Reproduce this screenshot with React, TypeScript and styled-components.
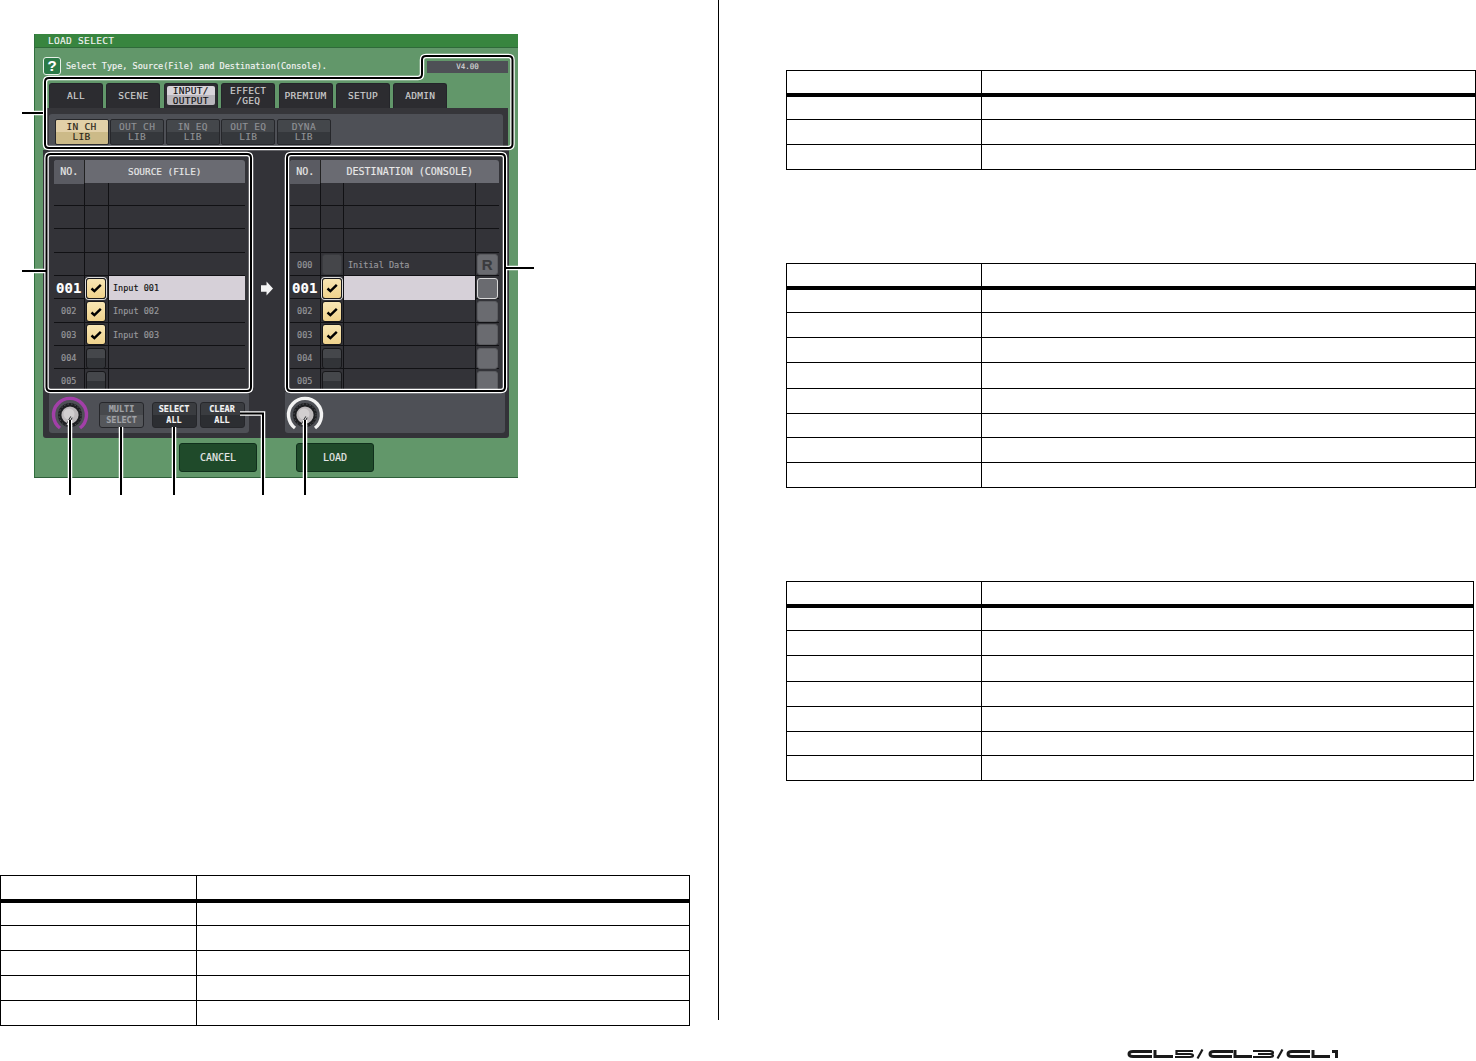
import React from "react";
import styled, { createGlobalStyle } from "styled-components";

const mono = `"DejaVu Sans Mono", "Liberation Mono", monospace`;

const GlobalStyle = createGlobalStyle`
  html, body {
    margin: 0;
    padding: 0;
    background: #fff;
  }
  * {
    box-sizing: border-box;
  }
`;

const Page = styled.div`
  display: flex;
  width: 1476px;
  height: 1061px;
  overflow: hidden;
  background: #fff;
`;

const LeftColumn = styled.div`
  position: relative;
  width: 718px;
  flex: none;
  padding-top: 34px;
`;

const Divider = styled.div`
  width: 1px;
  height: 1020px;
  flex: none;
  background: #000;
`;

const RightColumn = styled.div`
  margin-left: 67px;
  padding-top: 70px;
  flex: none;
  width: 690px;
`;

/* document tables */
const DocTableBox = styled.div<{ $width: number; $top: number }>`
  width: ${(p) => p.$width}px;
  margin-top: ${(p) => p.$top}px;
  border: 1px solid #000;
  border-bottom: 0;
`;

const DocRow = styled.div<{ $col: number; $height: number; $head?: boolean }>`
  display: grid;
  grid-template-columns: ${(p) => p.$col}px 1fr;
  height: ${(p) => p.$height}px;
  border-bottom: ${(p) => (p.$head ? 4 : 1)}px solid #000;
`;

const DocCell = styled.div`
  border-right: 1px solid #000;
`;

type DocTableProps = {
  width: number;
  col: number;
  rows: number[];
  top?: number;
  head?: number;
};

const DocTable: React.FC<DocTableProps> = ({ width, col, rows, top = 0, head = 26 }) => (
  <DocTableBox $width={width} $top={top}>
    <DocRow $col={col} $height={head} $head>
      <DocCell />
      <div />
    </DocRow>
    {rows.map((height, i) => (
      <DocRow key={i} $col={col} $height={height}>
        <DocCell />
        <div />
      </DocRow>
    ))}
  </DocTableBox>
);

/* console window */
const Window = styled.div`
  width: 484px;
  height: 444px;
  margin-left: 34px;
  background: #62976a;
  border-left: 1px solid #2f6f3d;
  border-bottom: 1px solid #2f5f3a;
  font-family: ${mono};
  -webkit-text-stroke: 0.15px currentColor;
`;

const TitleBar = styled.div`
  height: 14px;
  background: #38853f;
  border-bottom: 1px solid #2f6a3a;
  padding-left: 13px;
  color: #f2f2f2;
  font-size: 9.5px;
  letter-spacing: 0.3px;
  line-height: 14px;
`;

const PromptRow = styled.div`
  height: 35px;
  display: flex;
  align-items: flex-start;
  padding: 9px 10px 0 8px;
`;

const HelpIcon = styled.div`
  width: 18px;
  height: 18px;
  background: #2b7a47;
  border: 1px solid #e8f0e8;
  border-radius: 3px;
  color: #fff;
  font-family: "Liberation Sans", sans-serif;
  font-weight: 700;
  font-size: 15px;
  line-height: 16px;
  text-align: center;
`;

const PromptText = styled.div`
  margin-left: 5px;
  flex: 1;
  color: #f4f4f4;
  font-size: 8.5px;
  line-height: 18px;
  white-space: nowrap;
`;

const VersionBox = styled.div`
  width: 81px;
  height: 12px;
  margin-top: 4px;
  background: #4e5056;
  color: #d8d8d8;
  font-size: 7.5px;
  line-height: 12px;
  text-align: center;
`;

const TabRow = styled.div`
  display: flex;
  gap: 3.4px;
  height: 25px;
  padding-left: 14px;
`;

const Tab = styled.div`
  width: 54px;
  flex: none;
  display: flex;
  align-items: center;
  justify-content: center;
  text-align: center;
  border: 1px solid #24252a;
  border-bottom: 0;
  border-radius: 3px 3px 0 0;
  background: #2c2c30;
  color: #d0d0d0;
  font-size: 9.5px;
  letter-spacing: 0.3px;
  line-height: 10px;
  white-space: pre-line;
`;

const ActiveTabFace = styled.div`
  flex: 1;
  align-self: stretch;
  margin: 2px 2px 3px;
  display: flex;
  align-items: center;
  justify-content: center;
  border-radius: 2px;
  background: linear-gradient(#d8d4da 50%, #b9b6bc 50%);
  color: #111;
`;

const TabPanel = styled.div`
  height: 42px;
  margin: 0 10px 0 12px;
  padding-top: 6px;
  background: #36363a;
`;

const SubPanel = styled.div`
  height: 36px;
  margin: 0 5px 0 2px;
  display: flex;
  gap: 1.6px;
  padding: 5px 0 0 5.5px;
  border-radius: 3px 3px 0 0;
  background: #4e5056;
`;

const SubButton = styled.div<{ $on?: boolean }>`
  width: 54px;
  height: 26px;
  flex: none;
  display: flex;
  align-items: center;
  justify-content: center;
  border: 1px solid #26272b;
  border-radius: 2px;
  text-align: center;
  font-size: 9.5px;
  letter-spacing: 0.3px;
  line-height: 10.5px;
  white-space: pre-line;
  background: ${(p) =>
    p.$on
      ? "linear-gradient(#e2d0a8 50%, #ccba88 50%)"
      : "linear-gradient(#44474b 50%, #35383c 50%)"};
  color: ${(p) => (p.$on ? "#2a2418" : "#8f9195")};
`;

const MainPanel = styled.div`
  width: 466px;
  height: 288px;
  margin-left: 8px;
  display: grid;
  grid-template-columns: 206px 36px 224px;
  background: #333338;
  border-radius: 0 0 3px 3px;
`;

const Side = styled.div`
  display: flex;
  flex-direction: column;
`;

const ListBox = styled.div<{ $left: number; $width: number }>`
  height: 242px;
  padding: 9.5px 0 0 ${(p) => p.$left}px;
  width: ${(p) => p.$left + p.$width}px;
`;

const ListHeader = styled.div<{ $cols: string; $size: number }>`
  display: grid;
  grid-template-columns: ${(p) => p.$cols};
  height: 23.3px;
  background: #6a6b72;
  border-radius: 3px 3px 0 0;
  color: #e8e8e8;
  font-size: ${(p) => p.$size}px;
  line-height: 24px;
  text-align: center;
`;

const HeaderNo = styled.div`
  background: #5a5b62;
  border-right: 1px solid #222;
  border-radius: 3px 0 0 0;
  font-size: 10px;
  padding-left: 1px;
`;

const HeaderTitle = styled.div`
  grid-column: 2 / -1;
`;

const ListBody = styled.div`
  height: 207.2px;
  overflow: hidden;
`;

const ListRow = styled.div<{ $cols: string }>`
  display: grid;
  grid-template-columns: ${(p) => p.$cols};
  height: 23.3px;
  border-bottom: 1px solid #111114;
`;

const NoCell = styled.div<{ $selected?: boolean }>`
  border-right: 1px solid #111114;
  text-align: center;
  color: ${(p) => (p.$selected ? "#fff" : "#98989c")};
  font-size: ${(p) => (p.$selected ? 14 : 8.5)}px;
  font-weight: ${(p) => (p.$selected ? 700 : 400)};
  line-height: 24.5px;
`;

const CheckCell = styled.div`
  border-right: 1px solid #111114;
  display: flex;
  align-items: center;
  justify-content: center;
`;

const CheckBox = styled.div<{ $state: "on" | "off" | "dim"; $selected?: boolean }>`
  width: 20px;
  height: 21px;
  display: flex;
  align-items: center;
  justify-content: center;
  border-radius: 3px;
  border: 1px solid ${(p) => (p.$state === "dim" ? "#3a3b3f" : "#17171a")};
  box-shadow: ${(p) => (p.$selected ? "0 0 0 1px #d8d8d8" : "none")};
  background: ${(p) =>
    p.$state === "on"
      ? "linear-gradient(#f8e6b4, #efd28c)"
      : p.$state === "dim"
        ? "#45464a"
        : "linear-gradient(#45474b 45%, #323438 45%)"};
`;

const NameCell = styled.div<{ $selected?: boolean; $divided?: boolean }>`
  padding-left: 4.5px;
  background: ${(p) => (p.$selected ? "#d6d0d8" : "transparent")};
  border-right: ${(p) => (p.$divided ? "1px solid #111114" : "0")};
  color: ${(p) => (p.$selected ? "#111" : "#98989c")};
  font-size: 8.5px;
  line-height: 24.5px;
  white-space: pre;
`;

const RecallCell = styled.div`
  display: flex;
  align-items: center;
  justify-content: center;
`;

const RecallButton = styled.div<{ $selected?: boolean }>`
  width: 21px;
  height: 21px;
  border-radius: 3px;
  background: #6a6b70;
  border: 1px solid ${(p) => (p.$selected ? "#d8d8d8" : "#5b5c60")};
  color: #3a3b3e;
  font-family: "Liberation Sans", sans-serif;
  font-weight: 700;
  font-size: 15px;
  line-height: 19px;
  text-align: center;
`;

const ArrowColumn = styled.div`
  padding: 131px 0 0 12px;
`;

const ControlPanel = styled.div<{ $left: number; $width: number; $inset: number }>`
  height: 41px;
  width: ${(p) => p.$width}px;
  margin-left: ${(p) => p.$left}px;
  display: flex;
  padding: 4px 0 0 ${(p) => p.$inset}px;
  background: #4e5056;
  border-radius: 0 0 3px 3px;
`;

const KnobSvg = styled.svg`
  flex: none;
  display: block;
`;

const ControlButton = styled.div<{ $dim?: boolean; $gap: number }>`
  width: 45px;
  height: 26px;
  margin-top: 6px;
  margin-left: ${(p) => p.$gap}px;
  flex: none;
  display: flex;
  align-items: center;
  justify-content: center;
  border: 1px solid #26272b;
  border-radius: 3px;
  text-align: center;
  font-size: 8.5px;
  font-weight: 700;
  line-height: 11px;
  white-space: pre-line;
  background: ${(p) =>
    p.$dim ? "linear-gradient(#47494d 50%, #55575b 50%)" : "linear-gradient(#3a3c40 50%, #2c2e32 50%)"};
  color: ${(p) => (p.$dim ? "#a0a2a6" : "#f4f4f4")};
`;

const Footer = styled.div`
  display: flex;
  justify-content: center;
  gap: 39px;
  padding-top: 5px;
`;

const FooterButton = styled.div`
  width: 78px;
  height: 29px;
  border: 1px solid #10301c;
  border-radius: 3px;
  background: #1f4a2a;
  color: #e8e8e8;
  font-size: 10px;
  line-height: 27px;
  text-align: center;
`;

const CalloutLayer = styled.svg`
  position: absolute;
  left: 0;
  top: 0;
  pointer-events: none;
`;

const LogoSvg = styled.svg`
  display: block;
  margin: 268px 0 0 341px;
`;

type Row = {
  no?: string;
  name?: string;
  check?: "on" | "off" | "dim";
  selected?: boolean;
  recall?: string;
};

const blank: Row = {};

const sourceRows: Row[] = [
  blank,
  blank,
  blank,
  blank,
  { no: "001", name: "Input 001", check: "on", selected: true },
  { no: "002", name: "Input 002", check: "on" },
  { no: "003", name: "Input 003", check: "on" },
  { no: "004", check: "off" },
  { no: "005", check: "off" },
];

const destRows: Row[] = [
  blank,
  blank,
  blank,
  { no: "000", name: "Initial Data", check: "dim", recall: "R" },
  { no: "001", check: "on", selected: true, recall: "" },
  { no: "002", check: "on", recall: "" },
  { no: "003", check: "on", recall: "" },
  { no: "004", check: "off", recall: "" },
  { no: "005", check: "off", recall: "" },
];

const tabs = ["ALL", "SCENE", "INPUT/\nOUTPUT", "EFFECT\n/GEQ", "PREMIUM", "SETUP", "ADMIN"];
const subTabs = ["IN CH\nLIB", "OUT CH\nLIB", "IN EQ\nLIB", "OUT EQ\nLIB", "DYNA\nLIB"];

const CheckMark = () => (
  <svg width="12" height="10" viewBox="0 0 12 10">
    <path d="M1.5 5.5 L4.4 8.2 L10.8 1.8" fill="none" stroke="#000" strokeWidth="2.4" />
  </svg>
);

const Knob: React.FC<{ color: string }> = ({ color }) => (
  <KnobSvg width="38" height="36" viewBox="0 0 38 36">
    <path d="M9 32 A16.5 16.5 0 1 1 29 32" fill="none" stroke={color} strokeWidth="3.4" />
    <circle cx="19" cy="19" r="12" fill="#1e1f22" />
    <circle cx="19" cy="19" r="11" fill="none" stroke="#55565a" strokeWidth="1" strokeDasharray="1.5 2" />
    <circle cx="19" cy="19" r="8.6" fill="#bdb9bb" />
    <circle cx="18" cy="18" r="5.5" fill="#d2cfd0" />
    <path d="M20.5 21 L16 29" stroke="#2a2b2e" strokeWidth="2.6" />
    <path d="M20.5 21 L16 29" stroke="#eee" strokeWidth="1" />
  </KnobSvg>
);

const listCols = {
  source: "30.5px 24px 1fr",
  dest: "30.5px 23px 132px 1fr",
};

const ListRows: React.FC<{ rows: Row[]; cols: string; dest?: boolean }> = ({ rows, cols, dest }) => (
  <ListBody>
    {rows.map((row, i) => (
      <ListRow key={i} $cols={cols}>
        <NoCell $selected={row.selected}>{row.no}</NoCell>
        <CheckCell>
          {row.check && (
            <CheckBox $state={row.check} $selected={row.selected}>
              {row.check === "on" && <CheckMark />}
            </CheckBox>
          )}
        </CheckCell>
        <NameCell $selected={row.selected} $divided={dest}>
          {row.name}
        </NameCell>
        {dest && (
          <RecallCell>
            {row.recall !== undefined && <RecallButton $selected={row.selected}>{row.recall}</RecallButton>}
          </RecallCell>
        )}
      </ListRow>
    ))}
  </ListBody>
);

const ConsoleWindow = () => (
  <Window>
    <TitleBar>LOAD SELECT</TitleBar>
    <PromptRow>
      <HelpIcon>?</HelpIcon>
      <PromptText>Select Type, Source(File) and Destination(Console).</PromptText>
      <VersionBox>V4.00</VersionBox>
    </PromptRow>
    <TabRow>
      {tabs.map((t) =>
        t.startsWith("INPUT") ? (
          <Tab key={t}>
            <ActiveTabFace>{t}</ActiveTabFace>
          </Tab>
        ) : (
          <Tab key={t}>{t}</Tab>
        )
      )}
    </TabRow>
    <TabPanel>
      <SubPanel>
        {subTabs.map((t, i) => (
          <SubButton key={t} $on={i === 0}>
            {t}
          </SubButton>
        ))}
      </SubPanel>
    </TabPanel>
    <MainPanel>
      <Side>
        <ListBox $left={11} $width={191}>
          <ListHeader $cols={listCols.source} $size={9.4}>
            <HeaderNo>NO.</HeaderNo>
            <HeaderTitle>SOURCE (FILE)</HeaderTitle>
          </ListHeader>
          <ListRows rows={sourceRows} cols={listCols.source} />
        </ListBox>
        <ControlPanel $left={6} $width={200} $inset={2}>
          <Knob color="#a23fa8" />
          <ControlButton $dim $gap={10}>{"MULTI\nSELECT"}</ControlButton>
          <ControlButton $gap={7.5}>{"SELECT\nALL"}</ControlButton>
          <ControlButton $gap={3}>{"CLEAR\nALL"}</ControlButton>
        </ControlPanel>
      </Side>
      <ArrowColumn>
        <svg width="12" height="15" viewBox="0 0 13 15">
          <path d="M0 4 H6 V0 L13 7.5 L6 15 V11 H0 Z" fill="#f4f4f4" />
        </svg>
      </ArrowColumn>
      <Side>
        <ListBox $left={5} $width={209}>
          <ListHeader $cols={listCols.dest} $size={10}>
            <HeaderNo>NO.</HeaderNo>
            <HeaderTitle>DESTINATION (CONSOLE)</HeaderTitle>
          </ListHeader>
          <ListRows rows={destRows} cols={listCols.dest} dest />
        </ListBox>
        <ControlPanel $left={0} $width={220} $inset={1}>
          <Knob color="#f2f2f2" />
        </ControlPanel>
      </Side>
    </MainPanel>
    <Footer>
      <FooterButton>CANCEL</FooterButton>
      <FooterButton>LOAD</FooterButton>
    </Footer>
  </Window>
);

const outlineTop =
  "M45 82 Q45 78 49 78 L418 78 Q422 78 422 74 L422 60 Q422 56 426 56 L508.5 56 Q512.5 56 512.5 60 L512.5 144 Q512.5 148 508.5 148 L49 148 Q45 148 45 144 Z";
const outlineSource =
  "M50.5 154 L247 154 Q251 154 251 158 L251 387 Q251 391 247 391 L50.5 391 Q46.5 391 46.5 387 L46.5 158 Q46.5 154 50.5 154 Z";
const outlineDest =
  "M291 154 L501 154 Q505 154 505 158 L505 387 Q505 391 501 391 L291 391 Q287 391 287 387 L287 158 Q287 154 291 154 Z";

const haloPaths = [
  outlineTop,
  outlineSource,
  outlineDest,
  "M33 113 H43",
  "M33 271 H46",
  "M506 268 H518",
  "M70 420 V478",
  "M121 427 V478",
  "M174 427 V478",
  "M240 413.5 H263 V478",
  "M305 420 V478",
];

const linePaths = [
  outlineTop,
  outlineSource,
  outlineDest,
  "M22 113 H43",
  "M22 271 H46",
  "M506 268 H534",
  "M70 420 V495",
  "M121 427 V495",
  "M174 427 V495",
  "M240 413.5 H263 V495",
  "M305 420 V495",
];

const Callouts = () => (
  <CalloutLayer width="718" height="500" viewBox="0 0 718 500">
    {haloPaths.map((d) => (
      <path key={d} d={d} fill="none" stroke="#fff" strokeWidth="4.5" />
    ))}
    {linePaths.map((d) => (
      <path key={d} d={d} fill="none" stroke="#000" strokeWidth="2" />
    ))}
  </CalloutLayer>
);

const Logo = () => (
  <LogoSvg width="213" height="11" viewBox="0 0 213 11" aria-label="CL5/CL3/CL1">
    <g fill="none" stroke="#1a1a1a">
      <g strokeWidth="3">
        <path d="M25 2.4 H6 Q2 2.4 2 4.9 Q2 7.4 6 7.4 H25" />
        <path d="M28 1 V7.4 H46" />
        <path d="M106 2.4 H87 Q83 2.4 83 4.9 Q83 7.4 87 7.4 H105" />
        <path d="M108 1 V7.4 H125" />
        <path d="M183 2.4 H165 Q161 2.4 161 4.9 Q161 7.4 165 7.4 H183" />
        <path d="M186 1 V7.4 H203" />
        <path d="M205 2.4 H209.5 V9" />
      </g>
      <g strokeWidth="2.2">
        <path d="M66 2 H49.5 V5 H63 Q66 5 66 6.6 Q66 8 63 8 H48" />
        <path d="M126 2 H143 Q146 2 146 3.5 Q146 5 143 5 H131 M143 5 Q146 5 146 6.6 Q146 8 143 8 H126" />
        <path d="M70.5 9.5 L75.5 0.5" />
        <path d="M150.5 9.5 L155.5 0.5" />
      </g>
    </g>
  </LogoSvg>
);

export default function App() {
  return (
    <Page>
      <GlobalStyle />
      <LeftColumn>
        <ConsoleWindow />
        <DocTable width={690} col={196} rows={[23, 25, 25, 25, 25]} top={397} head={27} />
        <Callouts />
      </LeftColumn>
      <Divider />
      <RightColumn>
        <DocTable width={690} col={195} rows={[23, 25, 25]} />
        <DocTable width={690} col={195} rows={[23, 25, 25, 26, 25, 24, 25, 25]} top={93} />
        <DocTable width={688} col={195} rows={[23, 25, 26, 25, 25, 24, 25]} top={93} />
        <Logo />
      </RightColumn>
    </Page>
  );
}
